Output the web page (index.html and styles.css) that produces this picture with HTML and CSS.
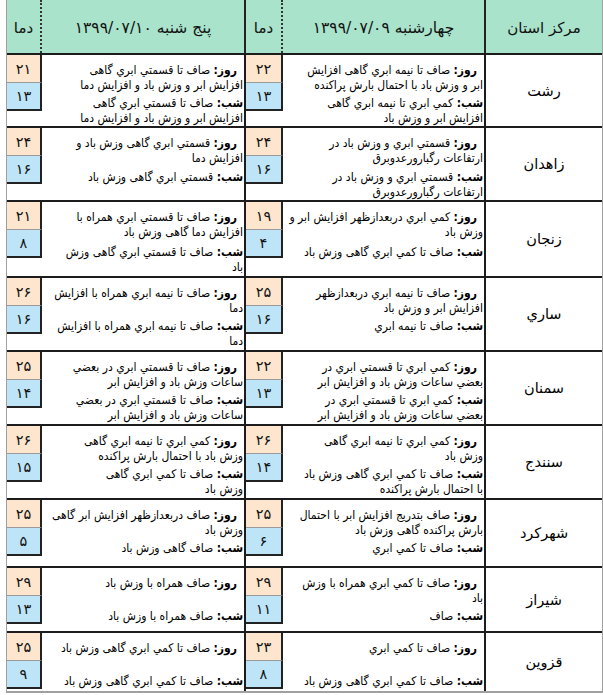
FILE: index.html
```html
<!DOCTYPE html>
<html lang="fa" dir="rtl">
<head>
<meta charset="utf-8">
<title>پیش بینی وضعیت هوا</title>
<link rel="stylesheet" href="styles.css">
</head>
<body>
<div class="sheet">
  <div class="row head">
    <div class="hc city-h">مرکز استان</div>
    <div class="hc dsc">چهارشنبه ۱۳۹۹/۰۷/۰۹</div>
    <div class="hc tmp">دما</div>
    <div class="hc dsc">پنج شنبه ۱۳۹۹/۰۷/۱۰</div>
    <div class="hc tmp">دما</div>
  </div>

  <div class="row h73">
    <div class="city">رشت</div>
    <div class="desc"><p class="day"><b>روز:</b> صاف تا نیمه ابري گاهی افزایش<br>ابر و وزش باد با احتمال بارش پراکنده</p><p class="night"><b>شب:</b> کمي ابري تا نیمه ابري گاهی<br>افزایش ابر و وزش باد</p></div>
    <div class="temp"><div class="tb d">۲۲</div><div class="tb n">۱۳</div></div>
    <div class="desc"><p class="day"><b>روز:</b> صاف تا قسمتي ابري گاهی<br>افزایش ابر و وزش باد و افزایش دما</p><p class="night"><b>شب:</b> صاف تا قسمتي ابري گاهی<br>افزایش ابر و وزش باد و افزایش دما</p></div>
    <div class="temp"><div class="tb d">۲۱</div><div class="tb n">۱۳</div></div>
  </div>

  <div class="row h74 wide-gap">
    <div class="city">زاهدان</div>
    <div class="desc"><p class="day"><b>روز:</b> قسمتي ابري و وزش باد در<br>ارتفاعات رگبارورعدوبرق</p><p class="night"><b>شب:</b> قسمتي ابري و وزش باد در<br>ارتفاعات رگبارورعدوبرق</p></div>
    <div class="temp"><div class="tb d">۲۴</div><div class="tb n">۱۶</div></div>
    <div class="desc"><p class="day"><b>روز:</b> قسمتي ابري گاهی وزش باد و<br>افزایش دما</p><p class="night"><b>شب:</b> قسمتي ابري گاهی وزش باد</p></div>
    <div class="temp"><div class="tb d">۲۴</div><div class="tb n">۱۶</div></div>
  </div>

  <div class="row h76 mid-gap">
    <div class="city">زنجان</div>
    <div class="desc"><p class="day"><b>روز:</b> کمي ابري دربعدازظهر افزایش ابر و<br>وزش باد</p><p class="night"><b>شب:</b> صاف تا کمي ابري گاهی وزش باد</p></div>
    <div class="temp"><div class="tb d">۱۹</div><div class="tb n">۴</div></div>
    <div class="desc"><p class="day"><b>روز:</b> صاف تا قسمتي ابري همراه با<br>افزایش دما گاهی وزش باد</p><p class="night"><b>شب:</b> صاف تا قسمتي ابري گاهی وزش<br>باد</p></div>
    <div class="temp"><div class="tb d">۲۱</div><div class="tb n">۸</div></div>
  </div>

  <div class="row h74">
    <div class="city">ساري</div>
    <div class="desc"><p class="day"><b>روز:</b> صاف تا نیمه ابري دربعدازظهر<br>افزایش ابر و وزش باد</p><p class="night"><b>شب:</b> صاف تا نیمه ابري</p></div>
    <div class="temp"><div class="tb d">۲۵</div><div class="tb n">۱۶</div></div>
    <div class="desc"><p class="day"><b>روز:</b> صاف تا نیمه ابري همراه با افزایش<br>دما</p><p class="night"><b>شب:</b> صاف تا نیمه ابري همراه با افزایش<br>دما</p></div>
    <div class="temp"><div class="tb d">۲۶</div><div class="tb n">۱۶</div></div>
  </div>

  <div class="row h74">
    <div class="city">سمنان</div>
    <div class="desc"><p class="day"><b>روز:</b> کمي ابري تا قسمتي ابري در<br>بعضي ساعات وزش باد و افزایش ابر</p><p class="night"><b>شب:</b> کمي ابري تا قسمتي ابري در<br>بعضي ساعات وزش باد و افزایش ابر</p></div>
    <div class="temp"><div class="tb d">۲۲</div><div class="tb n">۱۳</div></div>
    <div class="desc"><p class="day"><b>روز:</b> صاف تا قسمتي ابري در بعضي<br>ساعات وزش باد و افزایش ابر</p><p class="night"><b>شب:</b> صاف تا قسمتي ابري در بعضي<br>ساعات وزش باد و افزایش ابر</p></div>
    <div class="temp"><div class="tb d">۲۵</div><div class="tb n">۱۴</div></div>
  </div>

  <div class="row h74">
    <div class="city">سنندج</div>
    <div class="desc"><p class="day"><b>روز:</b> کمي ابري تا نیمه ابري گاهی<br>وزش باد</p><p class="night"><b>شب:</b> صاف تا کمي ابري گاهی وزش باد<br>با احتمال بارش پراکنده</p></div>
    <div class="temp"><div class="tb d">۲۶</div><div class="tb n">۱۴</div></div>
    <div class="desc"><p class="day"><b>روز:</b> کمي ابري تا نیمه ابري گاهی<br>وزش باد با احتمال بارش پراکنده</p><p class="night"><b>شب:</b> صاف تا کمي ابري گاهی<br>وزش باد</p></div>
    <div class="temp"><div class="tb d">۲۶</div><div class="tb n">۱۵</div></div>
  </div>

  <div class="row h68">
    <div class="city">شهرکرد</div>
    <div class="desc"><p class="day"><b>روز:</b> صاف بتدریج افزایش ابر با احتمال<br>بارش پراکنده گاهی وزش باد</p><p class="night"><b>شب:</b> صاف تا کمي ابري</p></div>
    <div class="temp"><div class="tb d">۲۵</div><div class="tb n">۶</div></div>
    <div class="desc"><p class="day"><b>روز:</b> صاف دربعدازظهر افزایش ابر گاهی<br>وزش باد</p><p class="night"><b>شب:</b> صاف گاهی وزش باد</p></div>
    <div class="temp"><div class="tb d">۲۵</div><div class="tb n">۵</div></div>
  </div>

  <div class="row h65">
    <div class="city">شیراز</div>
    <div class="desc"><p class="day"><b>روز:</b> صاف تا کمي ابري همراه با وزش<br>باد</p><p class="night"><b>شب:</b> صاف</p></div>
    <div class="temp"><div class="tb d">۲۹</div><div class="tb n">۱۱</div></div>
    <div class="desc"><p class="day"><b>روز:</b> صاف همراه با وزش باد</p><p class="night"><b>شب:</b> صاف همراه با وزش باد</p></div>
    <div class="temp"><div class="tb d">۲۹</div><div class="tb n">۱۳</div></div>
  </div>

  <div class="row h60 last">
    <div class="city">قزوین</div>
    <div class="desc"><p class="day"><b>روز:</b> صاف تا کمي ابري</p><p class="night"><b>شب:</b> صاف تا کمي ابري گاهی وزش باد</p></div>
    <div class="temp"><div class="tb d">۲۳</div><div class="tb n">۸</div></div>
    <div class="desc"><p class="day"><b>روز:</b> صاف تا کمي ابري گاهی وزش باد</p><p class="night"><b>شب:</b> صاف تا کمي ابري گاهی وزش باد</p></div>
    <div class="temp"><div class="tb d">۲۵</div><div class="tb n">۹</div></div>
  </div>
</div>
</body>
</html>
```
FILE: styles.css
```css
* { box-sizing: border-box; }
body {
  margin: 0;
  background: #ffffff;
  font-family: "DejaVu Sans", sans-serif;
  color: #111;
}
.sheet {
  width: 597px;
  direction: rtl;
  border-left: 1px solid #a0a0a0;
  border-right: 1px solid #a0a0a0;
  border-bottom: 2px solid #a0a0a0;
}
.row {
  display: grid;
  grid-template-columns: 116px 203px 37px 204px 35px;
  border-bottom: 2px solid #1c1c1c;
}
.row.last { border-bottom: none; height: 58px; }
.head { height: 55px; background: #a9e3cb; }
.h73 { height: 73px; }
.h74 { height: 74px; }
.h76 { height: 76px; }
.h68 { height: 68px; }
.h65 { height: 65px; }

.hc {
  display: flex;
  align-items: center;
  justify-content: center;
  font-size: 15px;
  padding-top: 3px;
}
.hc.dsc { border-right: 2px solid #222; font-size: 15.5px; }
.hc.tmp { border-right: 2px dotted #333; }

.city {
  display: flex;
  align-items: center;
  justify-content: center;
  font-size: 14.5px;
  color: #000;
}
.desc {
  border-right: 2px solid #1c1c1c;
  padding: 8px 1px 0 0;
  font-family: "DejaVu Sans Condensed", "DejaVu Sans", sans-serif;
  font-size: 12px;
  line-height: 15px;
  white-space: nowrap;
  color: #000;
}
.desc p { margin: 0; }
.desc .day { height: 32px; text-indent: 6px; }
.desc .night { padding-top: 1px; }
.wide-gap .desc .day { height: 34px; }
.wide-gap .desc .night { padding-top: 0; }
.mid-gap .desc .day { height: 34px; }
.desc b { font-weight: bold; }

.temp { display: flex; flex-direction: column; }
.tb {
  height: 28px;
  display: flex;
  align-items: center;
  justify-content: center;
  font-size: 14.5px;
  border-right: 2px solid #222;
}
.tb.d { background: #fde6cd; border-bottom: 1px solid #9a9a9a; }
.tb.n { background: #bee4f8; border-bottom: 2px solid #222; }
```
